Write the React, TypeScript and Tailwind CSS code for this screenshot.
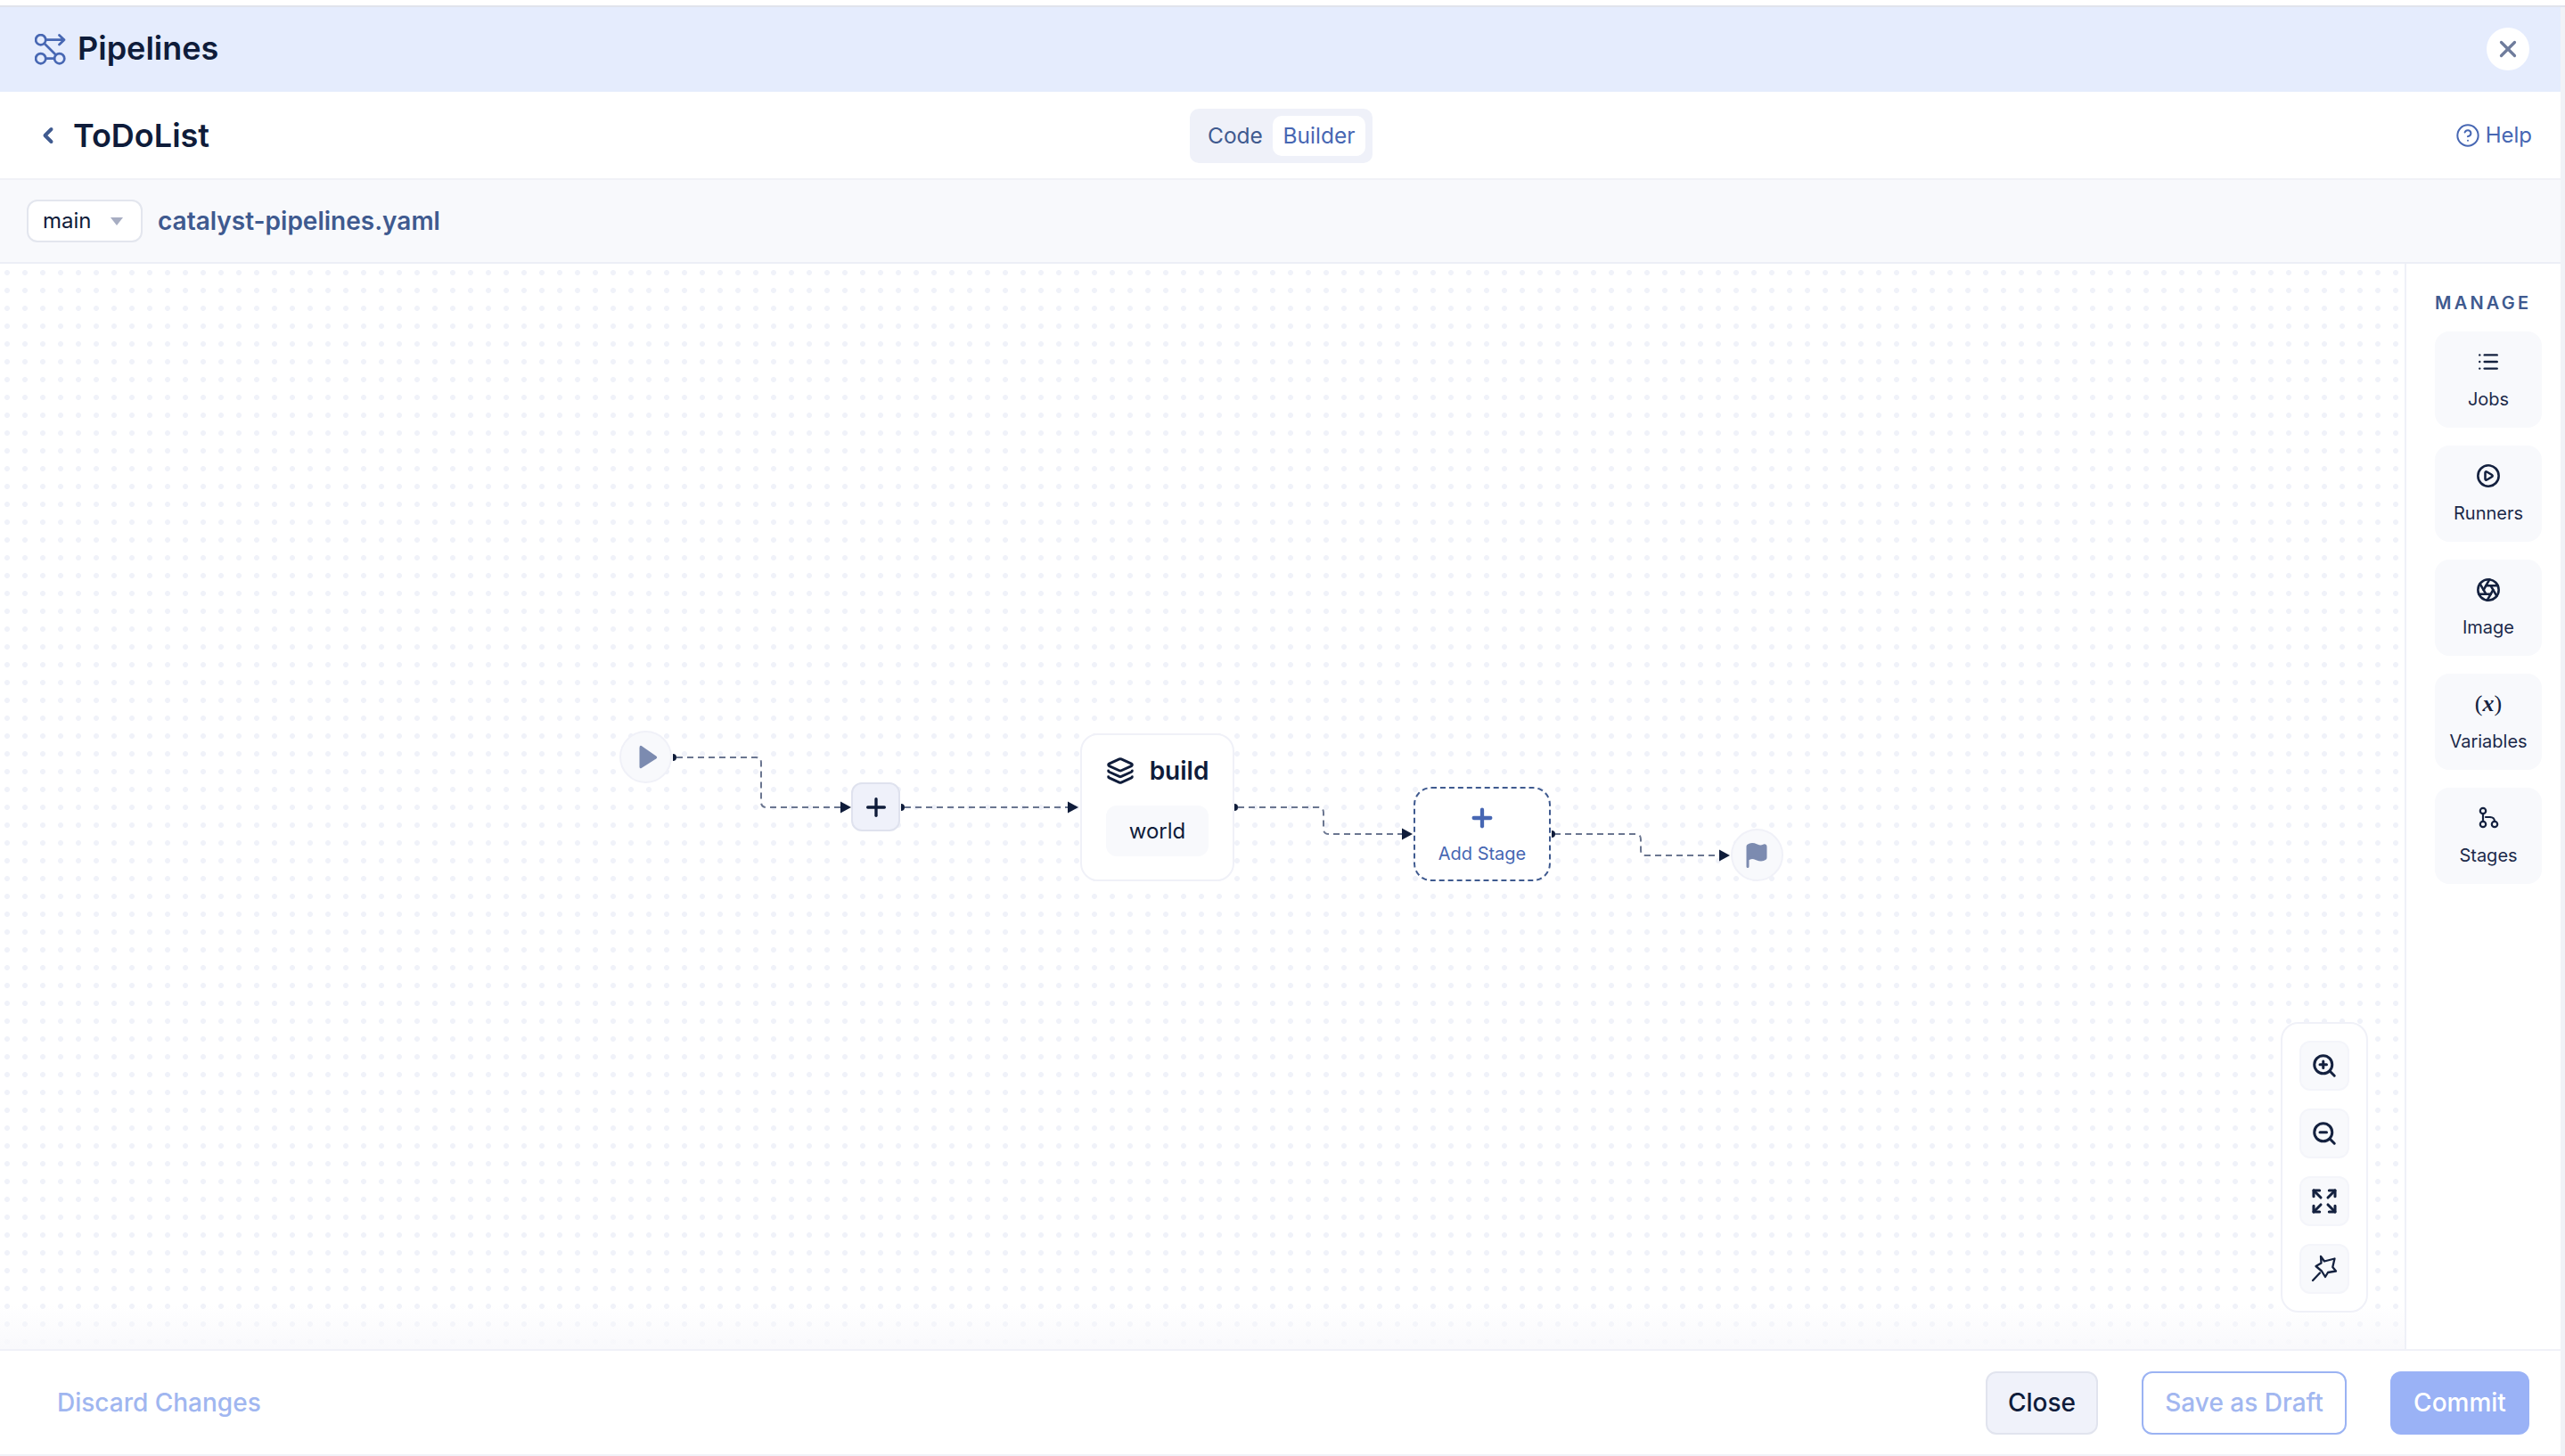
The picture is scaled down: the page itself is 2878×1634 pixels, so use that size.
import React from 'react';
import { ChevronLeft, CircleHelp, CirclePlay, Expand, Flag, Layers, List, Plus, Aperture, X, ZoomIn, ZoomOut } from 'lucide-react';

const font = "font-['Inter','Liberation_Sans',sans-serif]";

const PipelinesIcon = () => (
  <svg width="36" height="36" viewBox="0 0 36 36" fill="none" stroke="#4767b3" strokeWidth="2.7" strokeLinecap="round" strokeLinejoin="round">
    <circle cx="6.7" cy="6.7" r="5.6" />
    <circle cx="6.7" cy="27.7" r="5.6" />
    <circle cx="27.7" cy="27.7" r="5.6" />
    <path d="M12.5 6.7H33M27.5 1.5l5.5 5.2-5.5 5.3" />
    <path d="M11 11l12.3 12.3M12.5 27.7h9.4" />
  </svg>
);

const StagesIcon = () => (
  <svg width="26" height="26" viewBox="0 0 26 26" fill="none" stroke="#14213f" strokeWidth="2.2" strokeLinecap="round">
    <circle cx="7" cy="5" r="3.2" />
    <circle cx="7" cy="20" r="3.2" />
    <circle cx="20" cy="20" r="3.2" />
    <path d="M7 8.2v8.6M10 12h5c3 0 5 2 5 4.8" />
  </svg>
);

const StarWandIcon = () => (
  <svg width="30" height="32" viewBox="0 0 30 32" fill="none" stroke="#14213f" strokeWidth="2.3" strokeLinecap="round" strokeLinejoin="round">
    <path d="M11 2l4 5.5 11.5-3-2.2 9.5 3.7 4.5-9 1.5-3 5-4-6.5L5.500 13l6-3.500z" />
    <path d="M10 20.500L2 29" />
  </svg>
);

const VariablesIcon = () => (
  <span className="font-['Liberation_Serif',serif] text-[26px] leading-[26px] text-[#14213f]">
    (<i className="font-bold">x</i>)
  </span>
);

const manageItems = [
  { label: 'Jobs', icon: <List size={26} color="#14213f" strokeWidth={2.2} /> },
  { label: 'Runners', icon: <CirclePlay size={28} color="#14213f" strokeWidth={2.2} /> },
  { label: 'Image', icon: <Aperture size={28} color="#14213f" strokeWidth={2.2} /> },
  { label: 'Variables', icon: <VariablesIcon /> },
  { label: 'Stages', icon: <StagesIcon /> },
];

const zoomItems = [
  <ZoomIn size={30} color="#14213f" strokeWidth={2.4} />,
  <ZoomOut size={30} color="#14213f" strokeWidth={2.4} />,
  <Expand size={32} color="#14213f" strokeWidth={2.3} />,
  <StarWandIcon />,
];

const Handle = ({ x, y }: { x: number; y: number }) => (
  <path d={`M${x} ${y - 4}a4 4 0 0 1 0 8z`} fill="#0f1c3a" />
);

const Arrow = ({ x, y }: { x: number; y: number }) => (
  <path d={`M${x} ${y}l-12 -6.5v13z`} fill="#0f1c3a" />
);

// edge coordinates are relative to the canvas
const Edges = () => (
  <svg className="absolute inset-0" width="2698" height="1218">
    <g fill="none" stroke="#6b7690" strokeWidth="2" strokeDasharray="7 5">
      <path d="M759 554H848q6 0 6 6V604q0 6 6 6H945" />
      <path d="M1015 610H1200" />
      <path d="M1389 610H1479q6 0 6 6V634q0 6 6 6H1575" />
      <path d="M1744 640H1835q6 0 6 6V658q0 6 6 6H1931" />
    </g>
    <Handle x={755} y={554} />
    <Arrow x={955} y={610} />
    <Handle x={1011} y={610} />
    <Arrow x={1210} y={610} />
    <Handle x={1385} y={610} />
    <Arrow x={1585} y={640} />
    <Handle x={1741} y={640} />
    <Arrow x={1941} y={664} />
  </svg>
);

const App = () => {
  return (
    <div className={`${font} relative flex h-[1634px] w-[2878px] flex-col overflow-hidden bg-white`}>
      <div className="h-[6px] shrink-0 bg-white" />
      <div className="flex h-[97px] shrink-0 items-center justify-between border-t-2 border-[#e0e3ec] bg-[#e5ecfd] pl-[39px] pr-[40px]">
        <div className="flex items-center gap-[12px]">
          <PipelinesIcon />
          <span className="mb-[4px] text-[36px] font-semibold text-[#0f1c3a]">Pipelines</span>
        </div>
        <button className="mb-[1px] flex h-[48px] w-[48px] items-center justify-center rounded-full bg-white">
          <X size={30} color="#6f7c9c" strokeWidth={2.6} />
        </button>
      </div>

      <div className="relative flex h-[99px] shrink-0 items-center justify-between border-b-2 border-[#f0f1f7] pl-[40px] pr-[37px]">
        <div className="flex items-center gap-[14px]">
          <ChevronLeft size={28} color="#3f5a8f" strokeWidth={3.4} />
          <span className="text-[36px] font-semibold text-[#0f1c3a]">ToDoList</span>
        </div>
        <div className="absolute left-[1335px] top-[19px] flex h-[61px] w-[205px] items-center rounded-[10px] bg-[#eff1f9] pl-[8px]">
          <span className="w-[85px] pl-[12px] text-[24.500px] text-[#3f5a8f]">Code</span>
          <span className="flex h-[45px] w-[104px] items-center justify-center rounded-[10px] bg-white text-[24.500px] text-[#4767b3]">Builder</span>
        </div>
        <div className="flex items-center gap-[6px] text-[24px] text-[#4767b3]">
          <CircleHelp size={28} color="#4767b3" strokeWidth={1.7} />
          <span>Help</span>
        </div>
      </div>

      <div className="flex h-[94px] shrink-0 items-center gap-[17px] border-b-2 border-[#eceef6] bg-[#f8f9fc] pl-[30px]">
        <div className="flex h-[48px] w-[130px] items-center justify-between rounded-[12px] border-2 border-[#e3e6ee] bg-white pl-[16px] pr-[20px]">
          <span className="text-[24px] text-[#0f1c3a]">main</span>
          <svg width="14" height="9" viewBox="0 0 14 9"><path d="M0 0h14l-7 9z" fill="#a7adc2" /></svg>
        </div>
        <span className="text-[28px] font-semibold text-[#3f5a8f]">catalyst-pipelines.yaml</span>
      </div>

      <div className="flex h-[1218px] shrink-0">
        <div className="relative w-[2698px] shrink-0 bg-[radial-gradient(circle,#f0f2f9_2.7px,transparent_3.2px)] bg-[size:20px_20px] bg-[position:-2px_0]">
          <div className="absolute inset-x-0 bottom-0 h-[50px] bg-gradient-to-t from-[#f9f9fc] to-transparent" />
          <Edges />

          <div className="absolute left-[695px] top-[524px] flex h-[59px] w-[59px] items-center justify-center rounded-full border-2 border-[#f0f1f8] bg-[#f8f9fc]">
            <svg className="ml-[4px]" width="22" height="28" viewBox="0 0 22 28"><path d="M1.500 3.500v21q0 2.500 2.200 1.400l16.500-10.500q2-1.400 0-2.800l-16.500-11.500Q1.500 0 1.500 3.500z" fill="#7c8bb0" /></svg>
          </div>

          <div className="absolute left-[955px] top-[582px] flex h-[55px] w-[55px] items-center justify-center rounded-[12px] border-2 border-[#dfe2ee] bg-[#eff1fa]">
            <Plus size={32} color="#0f1c3a" strokeWidth={2.5} />
          </div>

          <div className="absolute left-[1212px] top-[527px] flex h-[166px] w-[173px] flex-col items-center rounded-[20px] border-2 border-[#f0f1f8] bg-white pt-[19px]">
            <div className="flex items-center gap-[17px]">
              <Layers size={32} color="#0f1c3a" strokeWidth={2.2} />
              <span className="text-[28px] font-semibold text-[#0f1c3a]">build</span>
            </div>
            <div className="mt-[18px] flex h-[57px] w-[115px] items-center justify-center rounded-[12px] bg-[#f8f9fc] text-[24px] text-[#0f1c3a]">world</div>
          </div>

          <div className="absolute left-[1586px] top-[587px] flex h-[106px] w-[154px] flex-col items-center rounded-[20px] border-2 border-dashed border-[#3f5a8f] bg-white pt-[17px]">
            <Plus size={32} color="#4767b3" strokeWidth={3.2} />
            <span className="mt-[9px] text-[20px] text-[#4767b3]">Add Stage</span>
          </div>

          <div className="absolute left-[1942px] top-[634px] flex h-[59px] w-[59px] items-center justify-center rounded-full border-2 border-[#f0f1f8] bg-[#f8f9fc]">
            <Flag className="mr-[2px]" size={30} color="#7c8bb0" fill="#7c8bb0" strokeWidth={2.4} />
          </div>

          <div className="absolute left-[2559px] top-[851px] flex h-[326px] w-[98px] flex-col items-center gap-[20px] rounded-[20px] border-2 border-[#f0f1f8] bg-white pt-[19px]">
            {zoomItems.map((icon, i) => (
              <button key={i} className="flex h-[56px] w-[56px] items-center justify-center rounded-[12px] border-2 border-[#f4f5fa] bg-[#f8f9fc]">
                {icon}
              </button>
            ))}
          </div>
        </div>

        <div className="flex w-[180px] flex-col border-l-2 border-[#eff1f8] pl-[32px] pt-[36px]">
          <span className="text-[20px] font-semibold leading-[16px] tracking-[3.2px] text-[#3f5a8f]">MANAGE</span>
          <div className="mt-[24px] flex flex-col gap-[20px]">
            {manageItems.map((item) => (
              <div key={item.label} className="flex h-[108px] w-[120px] flex-col items-center rounded-[16px] bg-[#f8f9fc] pt-[20px]">
                <div className="flex h-[28px] items-center">{item.icon}</div>
                <span className="mt-[13px] text-[20px] text-[#1c2a4a]">{item.label}</span>
              </div>
            ))}
          </div>
        </div>
      </div>

      <div className="flex h-[120px] shrink-0 items-center justify-between border-y-2 border-[#f0f1f8] pl-[64px] pr-[40px]">
        <span className="text-[28px] font-medium text-[#a0b6f0]">Discard Changes</span>
        <div className="flex items-center gap-[49px]">
          <button className="flex h-[71px] w-[126px] items-center justify-center rounded-[12px] border-2 border-[#e1e4ee] bg-[#f0f2fa] text-[28px] font-medium text-[#0f1c3a]">Close</button>
          <button className="flex h-[71px] w-[230px] items-center justify-center rounded-[12px] border-2 border-[#9bb3f3] bg-white text-[28px] font-medium text-[#a2b7f0]">Save as Draft</button>
          <button className="flex h-[71px] w-[156px] items-center justify-center rounded-[12px] bg-[#9ab2f6] text-[28px] font-medium text-white">Commit</button>
        </div>
      </div>

      {/* edge of the modal against the page behind it */}
      <div className="absolute bottom-0 right-0 top-[8px] w-[5px] bg-[#f0f2f7]" />
    </div>
  );
};

export default App;
